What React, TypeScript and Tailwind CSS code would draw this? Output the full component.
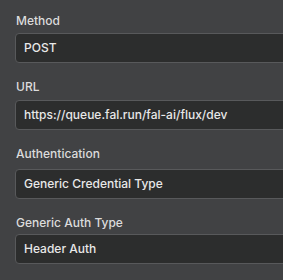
import React from 'react';

const fields = [
  { label: 'Method', value: 'POST', top: 'mt-[12px]', gap: 'mb-[3px]' },
  { label: 'URL', value: 'https://queue.fal.run/fal-ai/flux/dev', top: 'mt-[15px]', gap: 'mb-[4px]' },
  { label: 'Authentication', value: 'Generic Credential Type', top: 'mt-[15px]', gap: 'mb-[6px]' },
  { label: 'Generic Auth Type', value: 'Header Auth', top: 'mt-[15px]', gap: 'mb-[2px]' },
];

const App: React.FC = () => {
  return (
    <div
      className="w-[283px] h-[280px] overflow-hidden bg-[#414244] pl-[15px]"
      style={{ fontFamily: 'Inter, "Liberation Sans", sans-serif' }}
    >
      {fields.map((f) => (
        <div key={f.label} className={f.top}>
          {/* Label */}
          <div className={`pl-px text-[12px] leading-[18px] font-medium text-[#dcdcdc] ${f.gap}`}>{f.label}</div>
          {/* Field */}
          <div className="w-[320px] h-[30px] flex items-center rounded-[4px] border border-[#58595b] bg-[#2c2d2d] pl-2 text-[12px] font-medium text-[#e8e8e8]">
            {f.value}
          </div>
        </div>
      ))}
    </div>
  );
};

export default App;
